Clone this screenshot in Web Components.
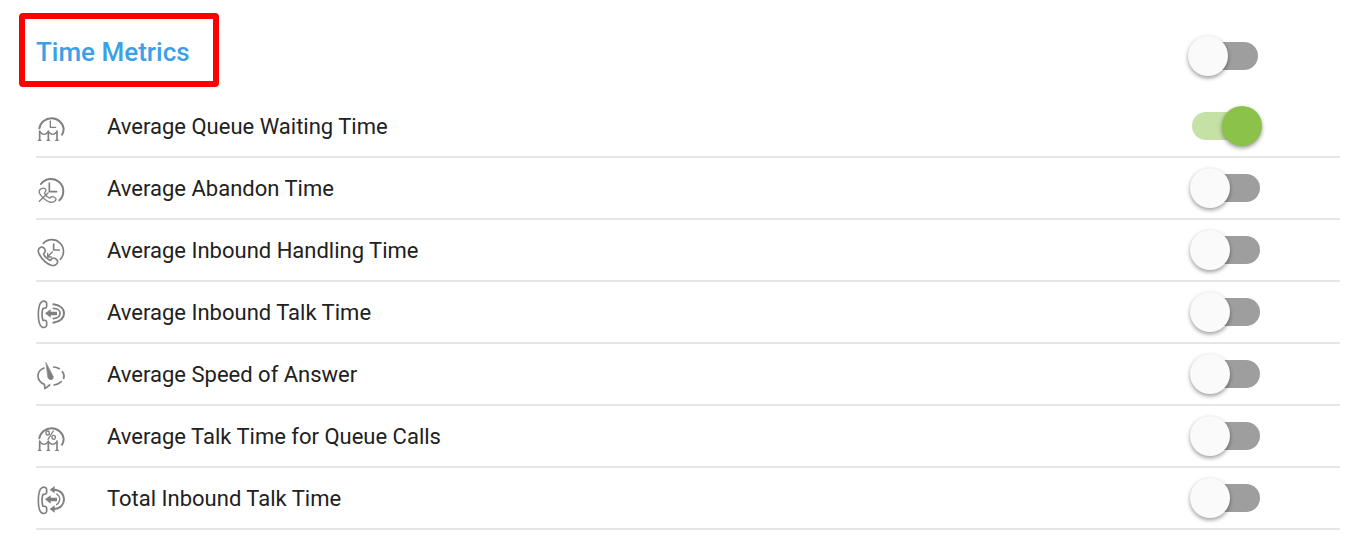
<!DOCTYPE html>
<html lang="en">
<head>
<meta charset="utf-8">
<meta name="viewport" content="width=device-width, initial-scale=1">
<title>Time Metrics</title>
<style>
body { margin: 0; background: #fff; color: #212121; font-family: Roboto, "Liberation Sans", sans-serif; }
</style>
</head>
<body>
<metric-panel heading="Time Metrics">
  <metric-row icon="queue" label="Average Queue Waiting Time" checked></metric-row>
  <metric-row icon="abandon" label="Average Abandon Time"></metric-row>
  <metric-row icon="handling" label="Average Inbound Handling Time"></metric-row>
  <metric-row icon="talk" label="Average Inbound Talk Time"></metric-row>
  <metric-row icon="speed" label="Average Speed of Answer"></metric-row>
  <metric-row icon="percent" label="Average Talk Time for Queue Calls"></metric-row>
  <metric-row icon="total" label="Total Inbound Talk Time"></metric-row>
</metric-panel>
<script>
const barrier = `
  <path stroke-width="6" d="M28 61A37 37 0 0 1 101 62Q101 72 96 80"/>
  <path stroke-width="5" d="M29 69V96M55 69V96M81 69V96"/>
  <path stroke-width="4" d="M25 97H33M51 97H59M77 97H85"/>
  <path stroke-width="4" d="M30 72Q42 86 54 72M56 72Q68 86 80 72"/>`;
const handset = `
  <path stroke-width="5" d="M36 23C28 27 25 43 25 61S28 95 36 99C40 102 50 100 50 94V85C50 80 45 78 39 79C35 70 35 52 39 43C45 44 50 42 50 37V28C50 22 40 20 36 23Z"/>`;
const arrow = `<path fill="currentColor" stroke="none" d="M45 58L62 46V53H81V64H62V71Z"/>`;
const icons = {
  queue: barrier + `<path stroke-width="4" d="M61 39V58H77"/>`,
  percent: barrier + `<g stroke-width="4"><ellipse cx="53" cy="45" rx="5" ry="6"/><ellipse cx="71" cy="58" rx="5" ry="6"/><path d="M70 39L54 64"/></g>`,
  abandon: `
    <path stroke-width="6" d="M33 42A37 37 0 1 1 88 91"/>
    <path stroke-width="5" d="M58 39V65H80"/>
    <path stroke-width="4" d="M35 56C27 59 25 66 30 72C36 82 47 91 58 96C67 99 77 95 78 88C78 83 69 79 65 80C61 81 62 85 58 84C52 81 47 76 44 71C43 67 48 65 48 61C47 56 41 52 35 56Z"/>
    <path stroke-width="4" d="M28 94L54 69"/>`,
  handling: `
    <path stroke-width="5" d="M40 34A35 35 0 1 1 91 82"/>
    <path stroke-width="5" d="M71 36V54H88"/>
    <path stroke-width="4" d="M67 60L53 74M53 64V75H64"/>
    <path stroke-width="5" d="M32 46C23 50 23 60 29 69C37 83 50 95 64 100C73 102 81 98 83 90C84 84 75 78 69 78C64 78 65 84 61 85C54 83 44 74 41 67C41 63 47 61 46 56C45 50 39 43 32 46Z"/>`,
  talk: handset + arrow + `
    <path stroke-width="6" d="M70 31C89 33 102 43 102 58S89 83 70 86"/>
    <path stroke-width="5" d="M70 43C83 43 90 50 90 58S83 73 70 74"/>`,
  speed: `
    <path fill="currentColor" stroke="currentColor" stroke-width="2" d="M48 20L70 62Q71 69 64 71Q57 72 54 65Z"/>
    <path stroke-width="5" d="M42 36C30 41 24 49 24 59C24 72 31 80 43 85L45 98L59 87"/>
    <path stroke-width="5" d="M71 33Q80 34 88 38M97 47Q105 57 101 67M94 77Q84 86 72 87"/>`,
  total: handset + arrow + `
    <path stroke-width="6" d="M72 29C92 30 102 43 102 58S92 86 72 87"/>
    <path stroke-width="4" d="M80 42Q89 48 89 58T80 74"/>
    <path fill="currentColor" stroke="none" d="M59 29L74 18V40ZM59 87L74 76V98Z"/>`
};

function attach(host, markup) {
  const template = document.createElement('template');
  template.innerHTML = markup;
  const root = host.attachShadow({ mode: 'open' });
  root.append(template.content.cloneNode(true));
  return root;
}

customElements.define('metric-icon', class extends HTMLElement {
  connectedCallback() {
    if (this.shadowRoot) return;
    attach(this, `
      <style>
        :host { display: block; flex: none; width: 36px; height: 36px; color: #808080; }
        svg { display: block; width: 100%; height: 100%; }
      </style>
      <svg viewBox="18 0 108 108" fill="none" stroke="currentColor" stroke-linecap="round" stroke-linejoin="round" aria-hidden="true">${icons[this.getAttribute('name')]}</svg>`);
  }
});

customElements.define('toggle-switch', class extends HTMLElement {
  connectedCallback() {
    if (this.shadowRoot) return;
    const root = attach(this, `
      <style>
        :host { display: block; flex: none; padding: 6px 2px; }
        input { display: block; appearance: none; position: relative; margin: 0; width: 68px; height: 28px; border-radius: 14px; background: #9e9e9e; cursor: pointer; }
        input::before { content: ""; position: absolute; left: -2px; top: -6px; width: 40px; height: 40px; border-radius: 50%; background: #fafafa; box-shadow: 0 2px 4px rgba(0,0,0,.4); }
        input:checked { background: #c5e1a5; }
        input:checked::before { left: 30px; background: #8bc34a; }
        input:focus-visible { outline: 2px solid #3aa0e8; outline-offset: 8px; }
      </style>
      <input type="checkbox" role="switch">`);
    const input = root.querySelector('input');
    input.setAttribute('aria-label', this.getAttribute('label'));
    input.checked = this.hasAttribute('checked');
  }
});

customElements.define('metric-row', class extends HTMLElement {
  connectedCallback() {
    if (this.shadowRoot) return;
    const label = this.getAttribute('label');
    attach(this, `
      <style>
        :host { display: flex; align-items: center; height: 60px; padding-right: 78px; border-bottom: 2px solid #e6e6e6; }
        span { flex: 1; margin-left: 35px; padding-top: 2px; font-size: 22px; line-height: 28px; }
      </style>
      <metric-icon name="${this.getAttribute('icon')}"></metric-icon>
      <span>${label}</span>
      <toggle-switch label="${label}" ${this.hasAttribute('checked') ? 'checked' : ''}></toggle-switch>`);
  }
});

customElements.define('metric-panel', class extends HTMLElement {
  connectedCallback() {
    if (this.shadowRoot) return;
    const heading = this.getAttribute('heading');
    attach(this, `
      <style>
        :host { display: block; padding: 13px 24px 12px 36px; }
        header { display: flex; justify-content: space-between; align-items: center; padding: 0 80px 9px 0; margin-left: -17px; }
        h2 { box-sizing: border-box; margin: 0; width: 200px; height: 74px; padding: 17px 11px; border: 6px solid #f00; border-radius: 4px; color: #3aa0e8; font-size: 26px; font-weight: 500; line-height: 32px; white-space: nowrap; }
        toggle-switch { margin-top: 12px; }
      </style>
      <header><h2>${heading}</h2><toggle-switch label="${heading}"></toggle-switch></header>
      <slot></slot>`);
  }
});
</script>
</body>
</html>
